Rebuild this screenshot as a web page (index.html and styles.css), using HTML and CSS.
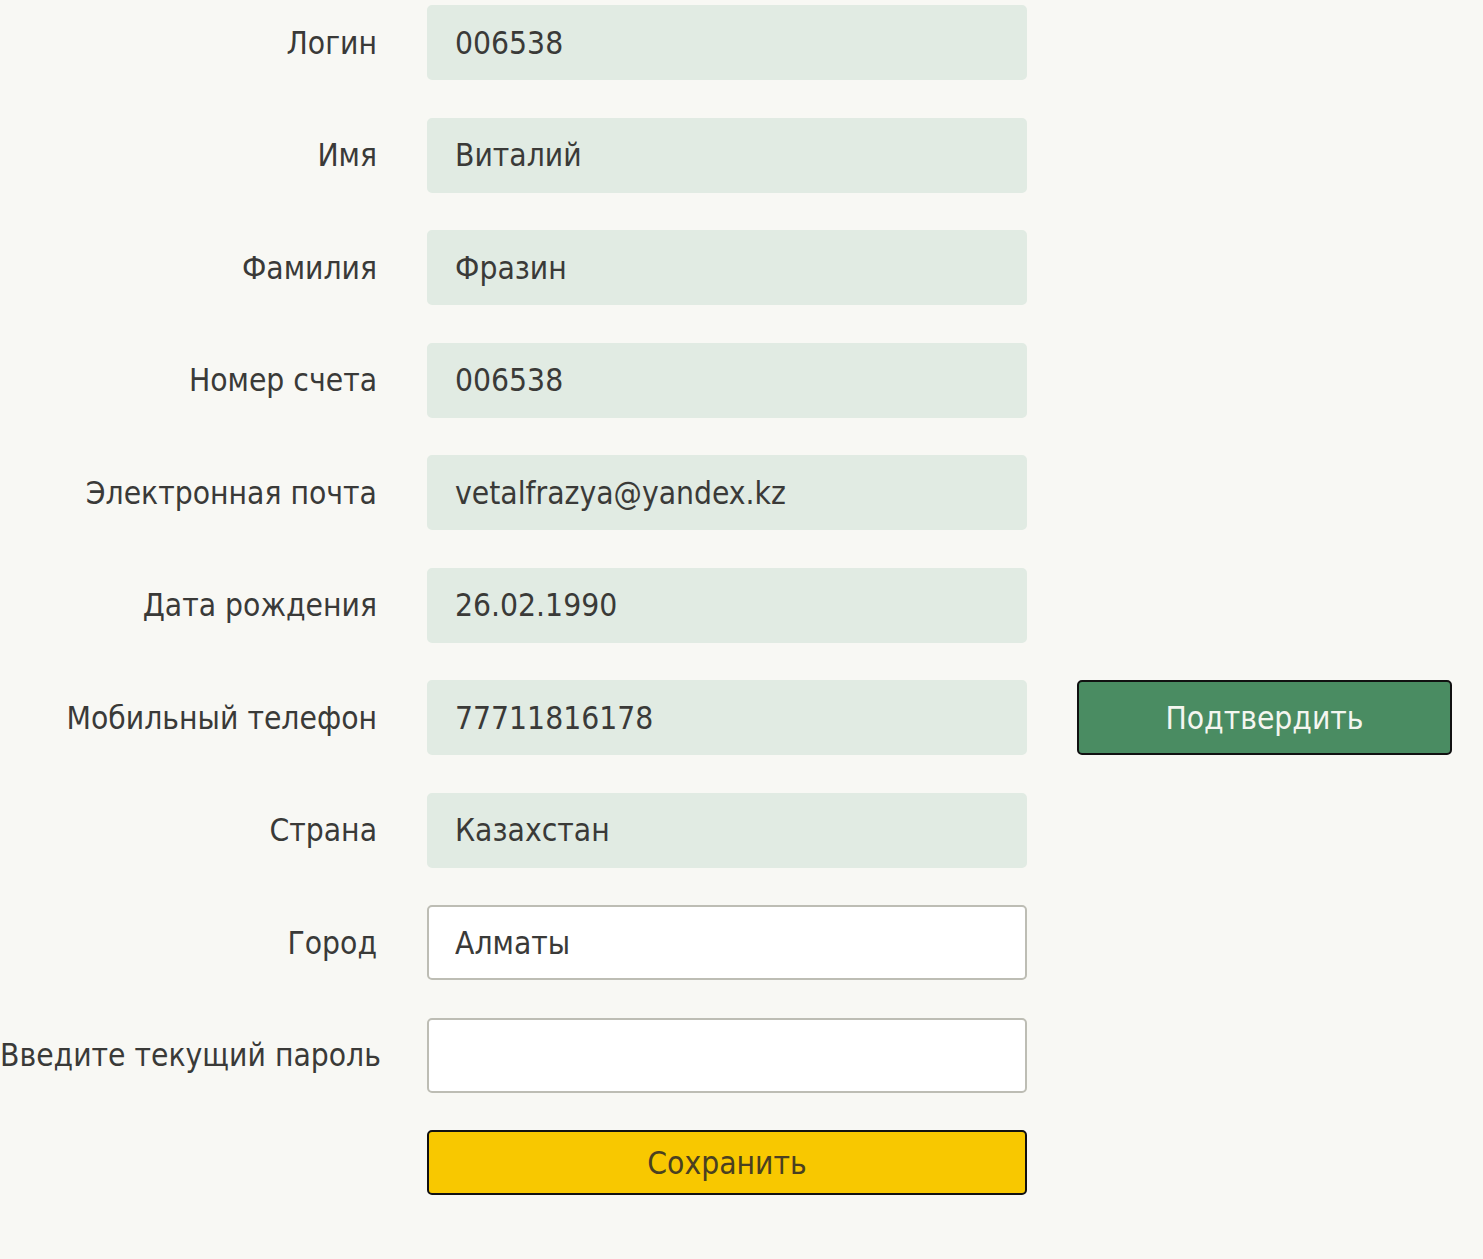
FILE: index.html
```html
<!DOCTYPE html>
<html lang="ru">
<head>
    <meta charset="UTF-8">
    <title>Профиль</title>
    <link rel="stylesheet" href="styles.css">
</head>
<body>
    <form class="profile-form">
        <label class="field-label" for="login">Логин</label>
        <input class="field readonly" id="login" value="006538" readonly>
        <span></span>

        <label class="field-label" for="name">Имя</label>
        <input class="field readonly" id="name" value="Виталий" readonly>
        <span></span>

        <label class="field-label" for="surname">Фамилия</label>
        <input class="field readonly" id="surname" value="Фразин" readonly>
        <span></span>

        <label class="field-label" for="account">Номер счета</label>
        <input class="field readonly" id="account" value="006538" readonly>
        <span></span>

        <label class="field-label" for="email">Электронная почта</label>
        <input class="field readonly" id="email" value="vetalfrazya@yandex.kz" readonly>
        <span></span>

        <label class="field-label" for="birth">Дата рождения</label>
        <input class="field readonly" id="birth" value="26.02.1990" readonly>
        <span></span>

        <label class="field-label" for="phone">Мобильный телефон</label>
        <input class="field readonly" id="phone" value="77711816178" readonly>
        <button type="button" class="btn btn-confirm">Подтвердить</button>

        <label class="field-label" for="country">Страна</label>
        <input class="field readonly" id="country" value="Казахстан" readonly>
        <span></span>

        <label class="field-label" for="city">Город</label>
        <input class="field" id="city" value="Алматы">
        <span></span>

        <label class="field-label" for="password">Введите текущий пароль</label>
        <input class="field" id="password" type="password">
        <span></span>

        <span></span>
        <button type="submit" class="btn btn-save">Сохранить</button>
        <span></span>
    </form>
</body>
</html>
```

FILE: styles.css
```css
* {
    margin: 0;
    padding: 0;
    box-sizing: border-box;
}
body {
    background: #f8f8f4;
    font-family: 'DejaVu Sans Condensed', 'DejaVu Sans', sans-serif;
    color: #3a3a38;
}
.profile-form {
    display: grid;
    grid-template-columns: 377px 600px 375px;
    column-gap: 50px;
    row-gap: 37.5px;
    align-items: center;
    padding-top: 5px;
}
.field-label {
    text-align: right;
    font-size: 31.5px;
    color: #3a3a38;
    white-space: nowrap;
}
.field {
    height: 75px;
    width: 100%;
    padding: 0 26px;
    font-family: inherit;
    font-size: 31.5px;
    color: #3a3a38;
    background: #fff;
    border: 2px solid #bdbdb4;
    border-radius: 5px;
    outline: none;
}
.field.readonly {
    background: #e1ebe3;
    border-color: #e1ebe3;
}
.btn {
    font-family: inherit;
    font-size: 31.5px;
    border: 2px solid #111;
    border-radius: 5px;
    cursor: pointer;
}
.btn-confirm {
    height: 75px;
    background: #4a8c62;
    color: #f4f6f0;
}
.btn-save {
    height: 65px;
    background: #f8c800;
    color: #4a4020;
}
```
